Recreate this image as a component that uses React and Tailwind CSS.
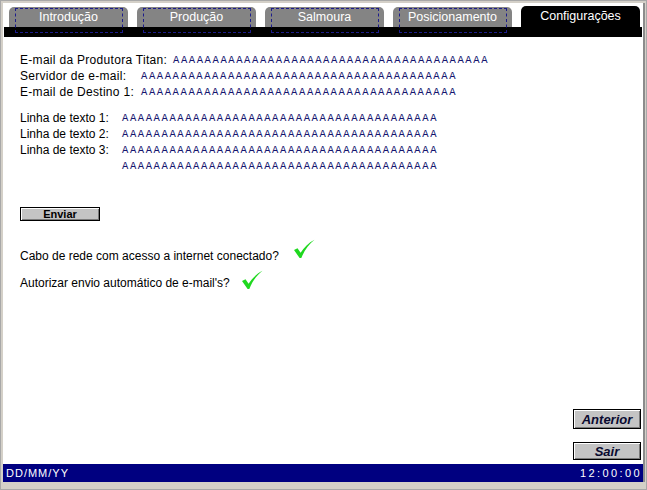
import React from "react";

const AS = "A".repeat(40);

function Tab({ label, selected }) {
  if (selected) {
    return (
      <div className="w-[119px] h-[21px] bg-black rounded-t-[5px] flex items-center justify-center text-white text-[12.5px] leading-none">
        {label}
      </div>
    );
  }
  return (
    <div className="relative w-[119px] h-[20px] bg-[#848484] rounded-t-[5px] flex items-center justify-center text-white text-[12.5px] leading-none">
      <div className="absolute top-[1px] left-[6px] w-[108px] h-[25px] border border-dashed border-[#1c1c8c]" />
      <span className="relative">{label}</span>
    </div>
  );
}

function Row({ label, w, wide }) {
  return (
    <div className="flex h-[16px] items-center">
      <div
        className={
          "shrink-0 text-[12px] leading-[16px] text-black " +
          (wide ? "tracking-[0.3px]" : "")
        }
        style={{ width: w }}
      >
        {label}
      </div>
      <div className="font-['Liberation_Mono',monospace] text-[10.5px] tracking-[1.6px] text-[#14146e] leading-[16px] whitespace-nowrap">
        {AS}
      </div>
    </div>
  );
}

function Check({ className }) {
  return (
    <svg width="22" height="20" viewBox="0 0 22 20" className={className}>
      <path
        d="M1 11 L4.5 9.2 L7.6 13.8 C11 8.5 15.5 3.8 21.5 0.8 C16 5.2 11.5 11 8.3 19 L6.6 19 Z"
        fill="#1fd81f"
      />
    </svg>
  );
}

function BevelButton({ label, className, textClass }) {
  return (
    <div
      className={
        "flex items-center justify-center border border-black bg-[#c4c4c4] shadow-[inset_1px_1px_0_#ffffff,inset_-1px_-1px_0_#7a7a7a] " +
        className
      }
    >
      <span className={textClass}>{label}</span>
    </div>
  );
}

export default function App() {
  return (
    <div className="w-[647px] h-[490px] bg-[#d4d0c8] border border-[#a8a8a8] pt-[2px] pl-[2px] pr-[1px] pb-[7px] flex flex-col font-['Liberation_Sans',Arial,sans-serif] overflow-hidden">
      <div className="flex-1 flex flex-col bg-white border-r-2 border-[#8c8c8c]">
        <div className="relative z-10 flex items-end gap-[9px] pl-[6px] h-[24px]">
          <Tab label="Introdução" />
          <Tab label="Produção" />
          <Tab label="Salmoura" />
          <Tab label="Posicionamento" />
          <Tab label="Configurações" selected />
        </div>
        <div className="h-[10px] mx-[1px] bg-black" />
        <div className="flex-1 flex flex-col pl-[17px] pt-[15px]">
          <Row label="E-mail da Produtora Titan:" w={153} wide />
          <Row label="Servidor de e-mail:" w={121} wide />
          <Row label="E-mail de Destino 1:" w={121} wide />
          <div className="h-[10px]" />
          <Row label="Linha de texto 1:" w={102} />
          <Row label="Linha de texto 2:" w={102} />
          <Row label="Linha de texto 3:" w={102} />
          <Row label="" w={102} />
          <BevelButton
            label="Enviar"
            className="mt-[33px] w-[80px] h-[14px]"
            textClass="text-[11px] font-bold leading-none text-black"
          />
          <div className="mt-[18px] flex items-end gap-[14px]">
            <span className="text-[12px] leading-[16px] text-black">
              Cabo de rede com acesso a internet conectado?
            </span>
            <Check className="mb-[5px]" />
          </div>
          <div className="mt-[6px] flex items-end gap-[11px]">
            <span className="text-[12px] leading-[16px] text-black">
              Autorizar envio automático de e-mail's?
            </span>
            <Check className="mb-[1px]" />
          </div>
          <div className="mt-auto self-end pr-[2px] pb-[4px] flex flex-col gap-[13px]">
            <BevelButton
              label="Anterior"
              className="w-[68px] h-[20px]"
              textClass="text-[13px] font-bold italic leading-none text-[#0a0a30]"
            />
            <BevelButton
              label="Sair"
              className="w-[68px] h-[18px]"
              textClass="text-[13px] font-bold italic leading-none text-[#0a0a30]"
            />
          </div>
        </div>
        <div className="h-[18px] bg-[#000080] flex items-center justify-between pl-[3px] pr-[1px] text-white text-[11px] leading-none">
          <span className="tracking-[1px]">DD/MM/YY</span>
          <span className="tracking-[2.4px]">12:00:00</span>
        </div>
      </div>
    </div>
  );
}
